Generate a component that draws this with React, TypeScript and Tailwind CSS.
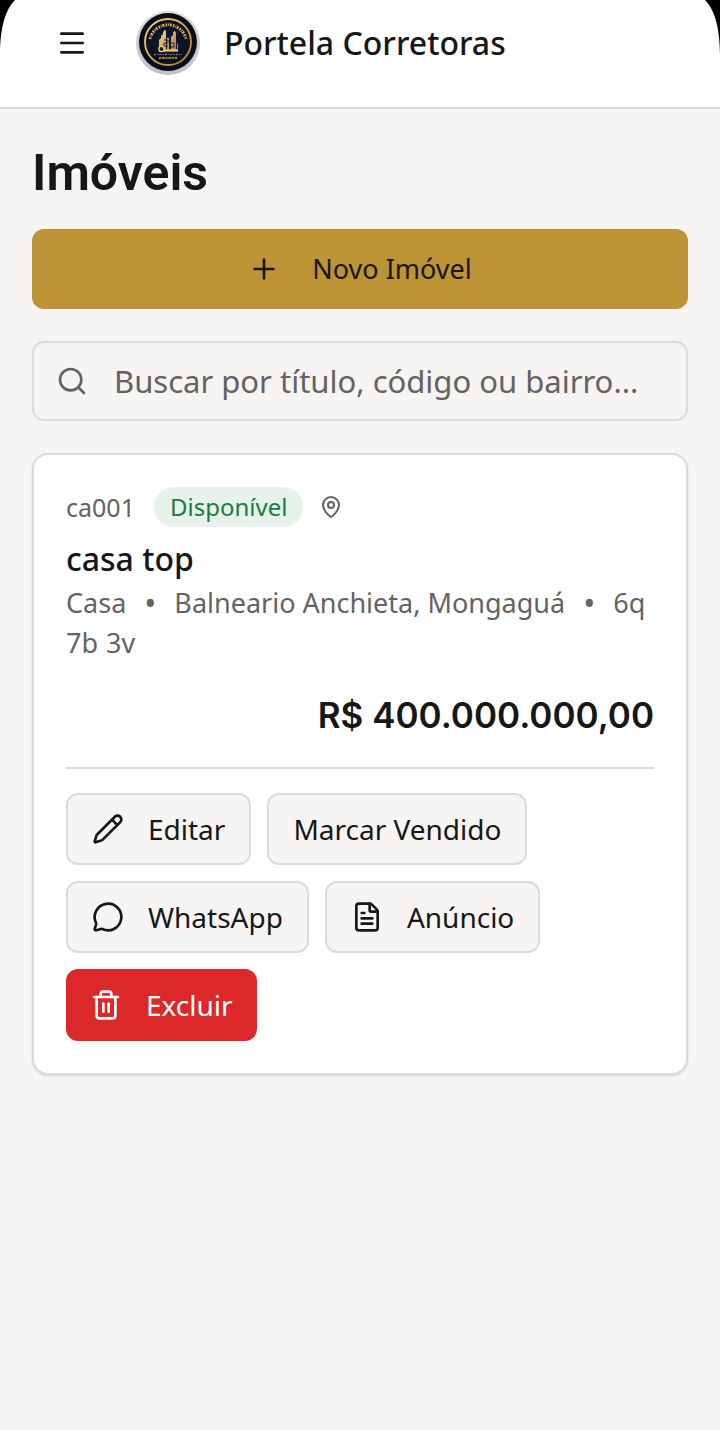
import { useState } from 'react'
import { FileText, MapPin, Menu, MessageCircle, Pencil, Plus, Search, Trash2 } from 'lucide-react'
import type { ReactNode } from 'react'

interface Property {
  code: string
  status: string
  title: string
  kind: string
  place: string
  rooms: string[]
  price: string
}

const PROPERTIES: Property[] = [
  {
    code: 'ca001',
    status: 'Disponível',
    title: 'casa top',
    kind: 'Casa',
    place: 'Balneario Anchieta, Mongaguá',
    rooms: ['6q', '7b', '3v'],
    price: 'R$ 400.000.000,00',
  },
]

export default function App() {
  const [query, setQuery] = useState('')

  const items = PROPERTIES.filter((p) =>
    `${p.title} ${p.code} ${p.place}`.toLowerCase().includes(query.toLowerCase())
  )

  return (
    <div className="min-h-screen bg-[#f6f5f3] font-['Noto_Sans',sans-serif] text-[#171717]">
      <Header />

      <main className="px-8 pt-8 pb-8">
        <h1 className="font-['Roboto',sans-serif] text-[50px] leading-[64px] font-semibold">Imóveis</h1>

        <button
          type="button"
          className="mt-6 flex h-20 w-full items-center justify-center gap-8 rounded-xl bg-[#bc9435] text-[27px] text-[#1c1508]"
        >
          <Plus className="size-8" />
          Novo Imóvel
        </button>

        <label className="mt-8 flex h-20 items-center gap-[26px] rounded-xl border-2 border-[#dddad7] px-[22px]">
          <Search className="size-8 shrink-0 text-[#636363]" />
          <input
            type="text"
            aria-label="Buscar imóveis"
            placeholder="Buscar por título, código ou bairro..."
            value={query}
            onChange={(e) => setQuery(e.target.value)}
            className="w-full min-w-0 bg-transparent text-[31px] outline-none placeholder:text-[#636363]"
          />
        </label>

        <div className="mt-8 space-y-6">
          {items.map((item) => (
            <PropertyCard key={item.code} item={item} />
          ))}
        </div>
      </main>
    </div>
  )
}

function Header() {
  return (
    <header className="relative flex items-center border-b-2 border-[#dddad7] bg-white px-14 pt-[11px] pb-8">
      <ScreenCorner className="left-0" />
      <ScreenCorner className="right-0 -scale-x-100" />
      <button type="button" aria-label="Menu">
        <Menu className="size-8" />
      </button>
      <Logo />
      <span className="ml-6 text-[32px] leading-[48px] font-medium">Portela Corretoras</span>
    </header>
  )
}

function ScreenCorner({ className }: { className: string }) {
  return (
    <svg className={`absolute top-0 h-14 w-4 ${className}`} viewBox="0 0 16 56" aria-hidden="true">
      <path d="M0 0H15C6 9 0 26 0 55Z" fill="#000" />
    </svg>
  )
}

function Logo() {
  return (
    <svg className="ml-12 size-16 shrink-0" viewBox="0 0 64 64" role="img" aria-label="Portela Corretoras">
      <defs>
        <linearGradient id="rim" x1="0" y1="0" x2="0" y2="1">
          <stop offset="0" stopColor="#dcdde2" />
          <stop offset="1" stopColor="#b9bfd0" />
        </linearGradient>
        <radialGradient id="face">
          <stop offset="0" stopColor="#101c38" />
          <stop offset="1" stopColor="#0b0d10" />
        </radialGradient>
        <linearGradient id="gold" x1="0" y1="0" x2="1" y2="1">
          <stop offset="0" stopColor="#f7d88f" />
          <stop offset="1" stopColor="#b5782c" />
        </linearGradient>
      </defs>
      <circle cx="32" cy="32" r="32" fill="url(#rim)" />
      <circle cx="32" cy="31" r="29" fill="url(#face)" />
      <circle cx="32" cy="31" r="23" fill="none" stroke="url(#gold)" strokeWidth="1.8" />
      {/* lettering band */}
      <path
        d="M14 28A18.500 18.500 0 0 1 50 28"
        fill="none"
        stroke="#d8b064"
        strokeWidth="3"
        strokeDasharray="1.600 1 0.800 0.800 2 1.200"
      />
      {/* skyline */}
      <path
        d="M23 39V29l2-2v-2l2-2v-2l2-2 1 1v19zM31 39V27h2v12zM35 39V26l2-2v-3l2-1 1 2v17zM41 39V33l1-1v7z"
        fill="url(#gold)"
      />
      <path d="M28 29h4v3h-4v3h4M34 28v8h4v-4h-4" fill="none" stroke="#101c38" strokeWidth="0.900" />
      <path d="M23 39.500h19" stroke="#f0c878" strokeWidth="2.200" />
      <circle cx="25.500" cy="38" r="2.600" fill="#101c38" stroke="#f0c878" strokeWidth="1.400" />
      <path d="M18 43.500h28" stroke="#b58c49" strokeWidth="1" strokeDasharray="2 1.500 1 1" />
      <path d="M23 47h18" stroke="#d0a45a" strokeWidth="1.600" strokeDasharray="2 0.800 3 0.800" />
    </svg>
  )
}

function PropertyCard({ item }: { item: Property }) {
  return (
    <article className="rounded-2xl border-2 border-[#dddad7] bg-white p-8 shadow-sm">
      <div className="flex items-center gap-4">
        <span className="min-w-[72px] text-[25px] leading-10 text-[#636363]">{item.code}</span>
        <span className="rounded-full bg-[#e6f2ea] px-4 text-2xl leading-10 text-[#1f7a3e]">
          {item.status}
        </span>
        <MapPin className="size-6 text-[#636363]" />
      </div>

      <h2 className="mt-2 text-[32px] leading-[48px] font-medium">{item.title}</h2>
      <div className="flex flex-wrap gap-x-2 text-[27px] leading-10 text-[#636363]">
        <span>{item.kind}</span>
        <Dot />
        <span>{item.place}</span>
        <Dot />
        {item.rooms.map((room) => (
          <span key={room}>{room}</span>
        ))}
      </div>
      <p className="mt-6 text-right font-['Inter',sans-serif] text-[35px] leading-[56px] font-semibold">
        {item.price}
      </p>

      <div className="mt-6 flex flex-wrap gap-4 border-t-2 border-[#dddad7] pt-6">
        <OutlineButton icon={<Pencil className="size-8" />}>Editar</OutlineButton>
        <OutlineButton>Marcar Vendido</OutlineButton>
        <OutlineButton icon={<MessageCircle className="size-8" />}>WhatsApp</OutlineButton>
        <OutlineButton icon={<FileText className="size-8" />}>Anúncio</OutlineButton>
        <button
          type="button"
          className="flex h-[72px] items-center gap-6 rounded-xl bg-[#dc2828] px-6 text-[28px] text-white"
        >
          <Trash2 className="size-8" />
          Excluir
        </button>
      </div>
    </article>
  )
}

function Dot() {
  return <span className="mx-[10px] text-[32px]">•</span>
}

function OutlineButton({ icon, children }: { icon?: ReactNode; children: ReactNode }) {
  return (
    <button
      type="button"
      className="flex h-[72px] items-center gap-6 rounded-xl border-2 border-[#dddad7] bg-[#f6f5f3] px-6 text-[28px]"
    >
      {icon}
      {children}
    </button>
  )
}
